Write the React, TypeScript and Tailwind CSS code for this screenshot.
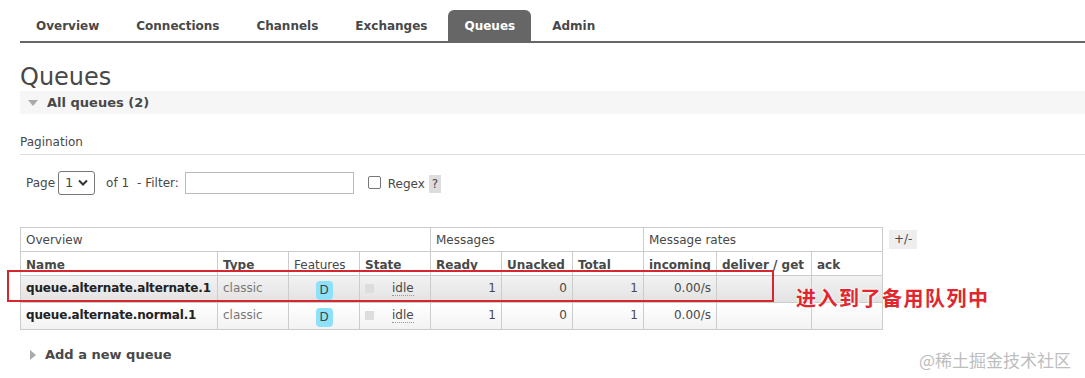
import React from 'react';

const tabs = ['Overview', 'Connections', 'Channels', 'Exchanges', 'Queues', 'Admin'];

type Row = { name: string; ready: number; unacked: number; total: number; rate: string; alt: boolean };

const rows: Row[] = [
  { name: 'queue.alternate.alternate.1', ready: 1, unacked: 0, total: 1, rate: '0.00/s', alt: true },
  { name: 'queue.alternate.normal.1', ready: 1, unacked: 0, total: 1, rate: '0.00/s', alt: false },
];

const th = 'border border-[#ccc] text-left px-[5px] pb-[3px] leading-[13px]';

export default function App() {
  return (
    <div
      className="relative w-[1085px] h-[378px] overflow-hidden bg-white text-[#484848] text-[12px]"
      style={{ fontFamily: '"DejaVu Sans", Verdana, sans-serif' }}
    >
      {/* nav */}
      <div className="ml-[20px] mt-[10px] flex border-b-2 border-[#666] h-[33px]">
        {tabs.map((t) => (
          <div
            key={t}
            className={
              'px-[16px] mr-[5px] pt-[1px] flex items-center font-bold text-[12px] rounded-t-md ' +
              (t === 'Queues' ? 'bg-[#666] text-white' : 'text-[#484848]')
            }
          >
            {t}
          </div>
        ))}
      </div>

      <div className="pl-[20px]">
        <h1 className="text-[24px] leading-[28px] mt-[20px] font-normal text-[#484848]">Queues</h1>

        <div className="h-[23px] bg-[#f6f6f6] flex items-center">
          <span className="ml-[8px] mr-[9px] w-0 h-0 border-l-[5px] border-r-[5px] border-t-[6px] border-l-transparent border-r-transparent border-t-[#aaa]" />
          <span className="font-bold text-[13px]">All queues (2)</span>
        </div>

        <div className="mt-[19px] pb-[3px] border-b border-[#ddd] text-[12px]">Pagination</div>

        <div className="mt-[15px] ml-[6px] flex items-center h-[25px]">
          <span>Page</span>
          <div className="ml-[3px] w-[37px] h-[24px] border border-[#767676] rounded-[3px] flex items-center justify-between px-[6px] text-[13px]">
            <span>1</span>
            <svg width="10" height="7" viewBox="0 0 10 7">
              <path d="M1 1.5 L5 5.5 L9 1.5" fill="none" stroke="#333" strokeWidth="2" />
            </svg>
          </div>
          <span className="ml-[11px]">of 1</span>
          <span className="ml-[8px]">- Filter:</span>
          <div className="ml-[6px] w-[169px] h-[22px] border border-[#bbb]" />
          <div className="ml-[14px] w-[13px] h-[13px] border border-[#767676] rounded-[2px]" />
          <span className="ml-[7px] mt-[2px]">Regex</span>
          <span className="ml-[4px] mt-[2px] px-[3px] bg-[#ddd] leading-[18px]">?</span>
        </div>

        <div className="mt-[32px] flex items-start">
          <table className="border-collapse text-[12px]">
            <thead>
              <tr className="h-[24px]">
                <th colSpan={4} className="border border-[#ccc] font-normal text-left px-[5px]">Overview</th>
                <th colSpan={3} className="border border-[#ccc] font-normal text-left px-[5px]">Messages</th>
                <th colSpan={3} className="border border-[#ccc] font-normal text-left px-[5px]">Message rates</th>
              </tr>
              <tr className="h-[24px] align-bottom">
                <th className={th + ' w-[197px]'}>Name</th>
                <th className={th + ' w-[71px]'}>Type</th>
                <th className={th + ' w-[71px] font-normal'}>Features</th>
                <th className={th + ' w-[71px]'}>State</th>
                <th className={th + ' w-[71px]'}>Ready</th>
                <th className={th + ' w-[71px]'}>Unacked</th>
                <th className={th + ' w-[71px]'}>Total</th>
                <th className={th + ' w-[73px]'}>incoming</th>
                <th className={th + ' w-[95px] whitespace-nowrap'}>deliver / get</th>
                <th className={th + ' w-[71px]'}>ack</th>
              </tr>
            </thead>
            <tbody>
              {rows.map((r) => (
                <tr
                  key={r.name}
                  className={
                    'h-[27px] ' +
                    (r.alt
                      ? 'bg-gradient-to-b from-[#f2f2f2] to-[#e2e2e2]'
                      : 'bg-gradient-to-b from-[#ffffff] to-[#f2f2f2]')
                  }
                >
                  <td className="border border-[#ccc] px-[5px] pb-[2px] font-bold text-[#222] whitespace-nowrap tracking-[-0.15px]">{r.name}</td>
                  <td className="border border-[#ccc] px-[5px] pb-[2px] text-[#777]">classic</td>
                  <td className="border border-[#ccc] px-[5px] text-center">
                    <span className="inline-block w-[17px] h-[19px] leading-[19px] mt-[2px] rounded-[4px] bg-[#8ee1fb] text-[#444] text-center">D</span>
                  </td>
                  <td className="border border-[#ccc] px-[5px] pb-[2px]">
                    <div className="flex items-center">
                      <span className="w-[9px] h-[9px] bg-[#ddd] mr-[18px]" />
                      <span className="border-b border-dotted border-[#999] leading-[14px]">idle</span>
                    </div>
                  </td>
                  <td className="border border-[#ccc] px-[5px] pb-[2px] text-right">{r.ready}</td>
                  <td className="border border-[#ccc] px-[5px] pb-[2px] text-right">{r.unacked}</td>
                  <td className="border border-[#ccc] px-[5px] pb-[2px] text-right">{r.total}</td>
                  <td className="border border-[#ccc] px-[5px] pb-[2px] text-right">{r.rate}</td>
                  <td className="border border-[#ccc] px-[5px]" />
                  <td className="border border-[#ccc] px-[5px]" />
                </tr>
              ))}
            </tbody>
          </table>
          <span className="ml-[6px] mt-[3px] px-[5px] leading-[19px] bg-[#eee] text-[12px]">+/-</span>
        </div>

        <div className="mt-[15px] flex items-center">
          <span className="ml-[10px] mr-[9px] w-0 h-0 border-t-[5px] border-b-[5px] border-l-[6px] border-t-transparent border-b-transparent border-l-[#aaa]" />
          <span className="font-bold text-[13px]">Add a new queue</span>
        </div>
      </div>

      {/* annotation */}
      <div className="absolute left-[7px] top-[270px] w-[767px] h-[32px] border-2 border-[#d6262e]" />
      <div
        className="absolute left-[796px] top-[284px] text-[20px] leading-[28px] font-bold text-[#e0262e] tracking-[1.5px]"
        style={{ fontFamily: '"Noto Sans CJK SC", sans-serif', textShadow: '0 0 2px #fff, 0 0 3px #fff' }}
      >
        进入到了备用队列中
      </div>
      <div
        className="absolute left-[919px] top-[348px] text-[17px] leading-[24px] text-[#bdbdbd]"
        style={{ fontFamily: '"Noto Sans CJK SC", sans-serif' }}
      >
        @稀土掘金技术社区
      </div>
    </div>
  );
}
